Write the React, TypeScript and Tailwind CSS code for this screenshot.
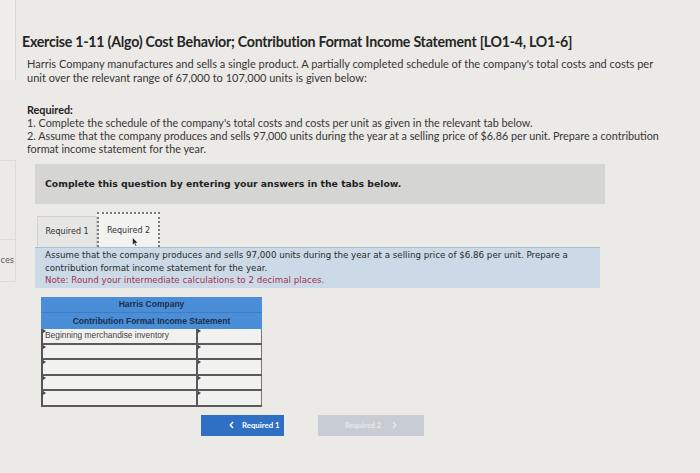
import React from "react";

const lato = { fontFamily: "Lato, 'Open Sans', sans-serif" };

export default function App() {
  return (
    <div className="w-[700px] h-[473px] overflow-hidden bg-[#ebeae7] flex text-[#2e2e2e]">
      {/* left sidebar sliver */}
      <div className="w-[16px] shrink-0 flex flex-col">
        <div className="h-[80px] border-r border-[#d9d9d6] bg-[#eeedea]"></div>
        <div className="h-[80px]"></div>
        <div className="h-[80px] border-r border-y border-[#dcdbd8]"></div>
        <div className="h-[42px] border-r border-b border-[#dcdbd8] flex items-center justify-end pr-[1px] text-[8px] text-[#555] font-['DejaVu_Sans',sans-serif]">
          ces
        </div>
      </div>

      <div className="flex-1 flex flex-col pl-[6px]">
        <h1 className="mt-[33px] text-[14.2px] leading-[18px] font-bold text-[#262626] tracking-[-0.25px]" style={lato}>
          Exercise 1-11 (Algo) Cost Behavior; Contribution Format Income Statement [LO1-4, LO1-6]
        </h1>

        <div className="pl-[5px]" style={lato}>
          <p className="mt-[6px] w-[633px] text-[11px] leading-[14px] text-[#363636]">
            Harris Company manufactures and sells a single product. A partially completed schedule of the company's total costs and costs per unit over the relevant range of 67,000 to 107,000 units is given below:
          </p>
          <div className="mt-[18px] w-[643px] text-[10.8px] leading-[13px]">
            <p className="font-bold text-[#222]">Required:</p>
            <p className="text-[#363636]">
              1. Complete the schedule of the company's total costs and costs per unit as given in the relevant tab below.
            </p>
            <p className="text-[#363636]">
              2. Assume that the company produces and sells 97,000 units during the year at a selling price of $6.86 per unit. Prepare a contribution format income statement for the year.
            </p>
          </div>
        </div>

        <div className="ml-[13px] w-[570px] mt-[9px]" style={{ fontFamily: "'DejaVu Sans', Verdana, sans-serif" }}>
          <div className="h-[40px] bg-[#d5d5d3] flex items-center pl-[10px]">
            <span className="text-[9.3px] font-bold text-[#222]">Complete this question by entering your answers in the tabs below.</span>
          </div>

          <div className="mt-[8px] flex items-end h-[35px]">
            <div className="ml-[2px] h-[31px] w-[60px] bg-[#e6e6e4] border border-[#cfcfcd] border-b-0 flex items-center justify-center text-[8px] text-[#333]">
              Required 1
            </div>
            <div className="relative h-[35px] w-[63px] bg-[#f2f2f0] border-2 border-dotted border-[#7a7a7a] border-b-0 flex items-center justify-center text-[8px] text-[#333]">
              Required 2
              <svg className="absolute left-[33px] top-[23px]" width="7" height="10" viewBox="0 0 7 10">
                <path d="M0.5 0.5 L0.5 8 L2.3 6.3 L3.6 9.3 L4.8 8.8 L3.6 5.9 L6 5.9 Z" fill="#222" stroke="#fff" strokeWidth="0.5" />
              </svg>
            </div>
          </div>

          <div className="w-[565px] h-[41px] bg-[#cbdae6] border-t border-[#a9bfd2] pl-[10px] pt-[1px] text-[8.7px] leading-[12.5px] text-[#2a2a2a]">
            <p>
              Assume that the company produces and sells 97,000 units during the year at a selling price of $6.86 per unit. Prepare a contribution format income statement for the year.
            </p>
            <p className="text-[#a3305a]">Note: Round your intermediate calculations to 2 decimal places.</p>
          </div>

          <div className="mt-[9px] ml-[6px] w-[221px]" style={{ fontFamily: "'Liberation Sans', Arial, sans-serif" }}>
            <div className="bg-[#4b8ed8] text-[#1d2f4a] text-[8.5px] font-bold">
              <div className="h-[16px] flex items-center justify-center border-b border-[#3f7cc2]">Harris Company</div>
              <div className="h-[16px] flex items-center justify-center">Contribution Format Income Statement</div>
            </div>
            <div className="border-l-2 border-[#555]">
              {["Beginning merchandise inventory", "", "", "", ""].map((t, i) => (
                <div key={i} className="flex h-[15.6px] border-b-2 border-[#5a5a5a] bg-[#f1f1ef]">
                  <div className="relative w-[155px] border-r-2 border-[#5a5a5a] flex items-center pl-[2px] text-[8.4px] text-[#444]">
                    <span className="absolute left-0 top-0 w-0 h-0 border-y-[2px] border-y-transparent border-l-[3px] border-l-[#446]"></span>
                    {t}
                  </div>
                  <div className="relative flex-1 border-r border-[#777]">
                    <span className="absolute left-0 top-0 w-0 h-0 border-y-[2px] border-y-transparent border-l-[3px] border-l-[#446]"></span>
                  </div>
                </div>
              ))}
            </div>
          </div>

          <div className="mt-[8px] flex gap-[34px] pl-[166px]" style={lato}>
            <div className="w-[83px] h-[21px] bg-[#2f6fc4] flex items-center pl-[28px] gap-[8px] text-white text-[7.8px] font-bold">
              <svg width="5" height="8" viewBox="0 0 5 8">
                <path d="M4 1 L1.3 4 L4 7" fill="none" stroke="#fff" strokeWidth="1.4" />
              </svg>
              <span>Required 1</span>
            </div>
            <div className="w-[106px] h-[21px] bg-[#c8cdd4] flex items-center pl-[27px] gap-[11px] text-[#e6e9ee] text-[7.5px] font-bold">
              <span>Required 2</span>
              <svg width="5" height="8" viewBox="0 0 5 8">
                <path d="M1 1 L3.7 4 L1 7" fill="none" stroke="#e6e9ee" strokeWidth="1.4" />
              </svg>
            </div>
          </div>
        </div>
      </div>
    </div>
  );
}
